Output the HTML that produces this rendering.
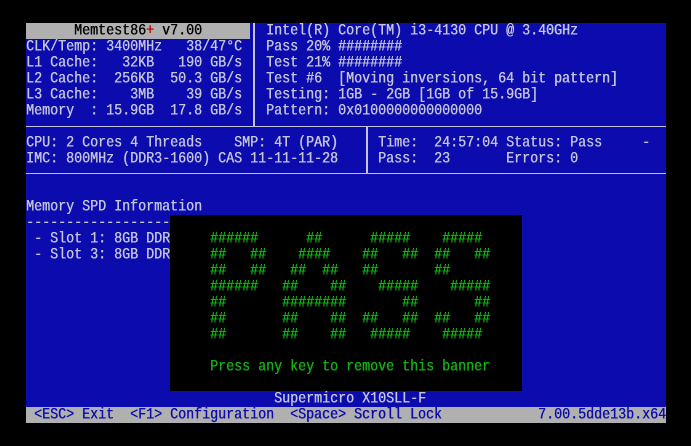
<!DOCTYPE html>
<html><head><meta charset="utf-8"><style>
body{margin:0;background:#000;width:691px;height:446px;overflow:hidden;position:relative}
#s{position:absolute;left:26px;top:23px;width:640px;height:400px;background:#0c0cae}
.t{position:absolute;white-space:pre;font-family:"Liberation Mono","DejaVu Sans Mono",monospace;font-size:13.33px;line-height:16px;height:16px;color:#c4c4d8;transform:translateY(1px) scaleY(1.18);transform-origin:0 50%;text-shadow:0.4px 0 0 currentColor}
.h{position:absolute;background:#c4c4d8;height:1px}
.v{position:absolute;background:#c4c4d8;width:2px}
.g{color:#12b012}
</style></head><body>
<div id="s">
<div style="position:absolute;left:0;top:0;width:224px;height:16px;background:#b0b0b0"></div>
<div class="t" style="left:48px;top:0;color:#000">Memtest86<span style="color:#c00000">+</span> v7.00</div>
<div class="v" style="left:227px;top:0;height:104px"></div>
<div class="h" style="left:0;top:103px;width:640px"></div>
<div class="v" style="left:340px;top:103px;height:48px"></div>
<div class="h" style="left:0;top:150px;width:640px"></div>

<div class="t" style="left:0;top:16px">CLK/Temp: 3400MHz   38/47°C</div>
<div class="t" style="left:0;top:32px">L1 Cache:   32KB   190 GB/s</div>
<div class="t" style="left:0;top:48px">L2 Cache:  256KB  50.3 GB/s</div>
<div class="t" style="left:0;top:64px">L3 Cache:    3MB    39 GB/s</div>
<div class="t" style="left:0;top:80px">Memory  : 15.9GB  17.8 GB/s</div>

<div class="t" style="left:240px;top:0">Intel(R) Core(TM) i3-4130 CPU @ 3.40GHz</div>
<div class="t" style="left:240px;top:16px">Pass 20% ########</div>
<div class="t" style="left:240px;top:32px">Test 21% ########</div>
<div class="t" style="left:240px;top:48px">Test #6  [Moving inversions, 64 bit pattern]</div>
<div class="t" style="left:240px;top:64px">Testing: 1GB - 2GB [1GB of 15.9GB]</div>
<div class="t" style="left:240px;top:80px">Pattern: 0x0100000000000000</div>

<div class="t" style="left:0;top:112px">CPU: 2 Cores 4 Threads    SMP: 4T (PAR)</div>
<div class="t" style="left:0;top:128px">IMC: 800MHz (DDR3-1600) CAS 11-11-11-28</div>
<div class="t" style="left:352px;top:112px">Time:  24:57:04 Status: Pass     -</div>
<div class="t" style="left:352px;top:128px">Pass:  23       Errors: 0</div>

<div class="t" style="left:0;top:176px">Memory SPD Information</div>
<div class="t" style="left:0;top:192px">----------------------------------------</div>
<div class="t" style="left:0;top:208px"> - Slot 1: 8GB DDR3-1600 - Kingston 9965525-W45)</div>
<div class="t" style="left:0;top:224px"> - Slot 3: 8GB DDR3-1600 - Kingston 9965525-W30)</div>

<div style="position:absolute;left:144px;top:192px;width:352px;height:176px;background:#000"></div>
<div class="t g" style="left:184px;top:208px">######      ##      #####    #####</div>
<div class="t g" style="left:184px;top:224px">##   ##    ####    ##   ##  ##   ##</div>
<div class="t g" style="left:184px;top:240px">##   ##   ##  ##   ##       ##</div>
<div class="t g" style="left:184px;top:256px">######   ##    ##    #####    #####</div>
<div class="t g" style="left:184px;top:272px">##       ########       ##       ##</div>
<div class="t g" style="left:184px;top:288px">##       ##    ##  ##   ##  ##   ##</div>
<div class="t g" style="left:184px;top:304px">##       ##    ##   #####    #####</div>
<div class="t g" style="left:184px;top:336px">Press any key to remove this banner</div>

<div class="t" style="left:248px;top:368px">Supermicro X10SLL-F</div>
<div style="position:absolute;left:0;top:384px;width:640px;height:16px;background:#b0b0b0"></div>
<div class="t" style="left:0;top:384px;color:#0c0cae"> &lt;ESC&gt; Exit  &lt;F1&gt; Configuration  &lt;Space&gt; Scroll Lock</div>
<div class="t" style="left:512px;top:384px;color:#0c0cae">7.00.5dde13b.x64</div>
</div>
</body></html>
